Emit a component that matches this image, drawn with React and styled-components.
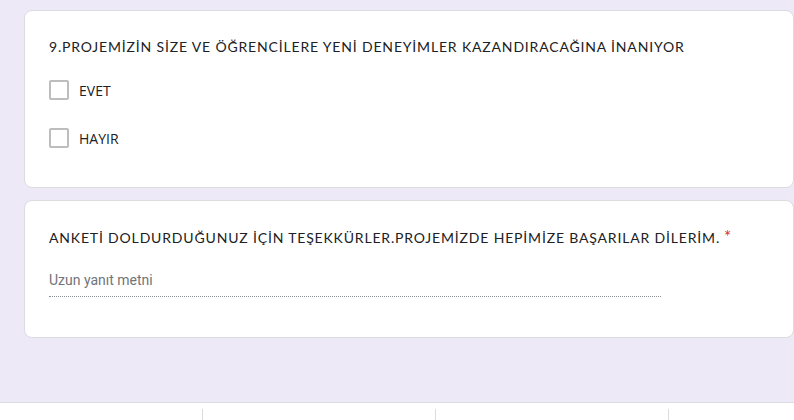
import React from "react";
import styled, { createGlobalStyle } from "styled-components";

const Global = createGlobalStyle`
  html, body {
    margin: 0;
    padding: 0;
    background: #ede9f7;
  }
  body {
    font-family: "Open Sans", "Liberation Sans", sans-serif;
    color: #202124;
  }
`;

const Page = styled.div`
  min-height: 420px;
  display: flex;
  flex-direction: column;
`;

const List = styled.div`
  display: flex;
  flex-direction: column;
  gap: 12px;
  padding: 10px 0 0 24px;
`;

const Card = styled.div`
  background: #fff;
  border: 1px solid #dadce0;
  border-radius: 8px;
  padding: 24px 24px ${(p) => p.$bottom || 24}px;
`;

const Title = styled.div`
  font-family: "Lato", "Open Sans", sans-serif;
  font-size: 14px;
  line-height: 24px;
  letter-spacing: 0.83px;
  color: #202124;
  .req {
    color: #d93025;
    font-size: 17px;
    margin-left: 4px;
  }
`;

const Options = styled.div`
  margin-top: 7px;
  padding-bottom: 1px;
  display: flex;
  flex-direction: column;
`;

const Option = styled.label`
  display: flex;
  align-items: center;
  height: 48px;
  gap: 10px;
  font-size: 14px;
  color: #202124;
`;

const Box = styled.span`
  box-sizing: border-box;
  width: 20px;
  height: 20px;
  border: 2px solid #bdbdbd;
  border-radius: 2px;
`;

const Answer = styled.div`
  margin-top: 22px;
  width: 612px;
  padding-bottom: 8px;
  border-bottom: 1px dotted #8a8f94;
  font-family: Roboto, sans-serif;
  font-size: 14px;
  color: #70757a;
`;

const Bottom = styled.div`
  margin-top: auto;
  height: 17px;
  background: #fff;
  border-top: 1px solid #dadce0;
  display: flex;
`;

const Cell = styled.div`
  width: ${(p) => p.$w}px;
  margin-top: 6px;
  border-left: ${(p) => (p.$first ? "none" : "1px solid #dadce0")};
`;

export default function App() {
  return (
    <Page>
      <Global />
      <List>
        <Card>
          <Title>9.PROJEMİZİN SİZE VE ÖĞRENCİLERE YENİ DENEYİMLER KAZANDIRACAĞINA İNANIYOR</Title>
          <Options>
            <Option>
              <Box />
              EVET
            </Option>
            <Option>
              <Box />
              HAYIR
            </Option>
          </Options>
        </Card>
        <Card $bottom={40}>
          <Title>
            ANKETİ DOLDURDUĞUNUZ İÇİN TEŞEKKÜRLER.PROJEMİZDE HEPİMİZE BAŞARILAR DİLERİM.
            <span className="req">*</span>
          </Title>
          <Answer>Uzun yanıt metni</Answer>
        </Card>
      </List>
      <Bottom>
        <Cell $first $w={203} />
        <Cell $w={233} />
        <Cell $w={233} />
        <Cell $w={125} />
      </Bottom>
    </Page>
  );
}
